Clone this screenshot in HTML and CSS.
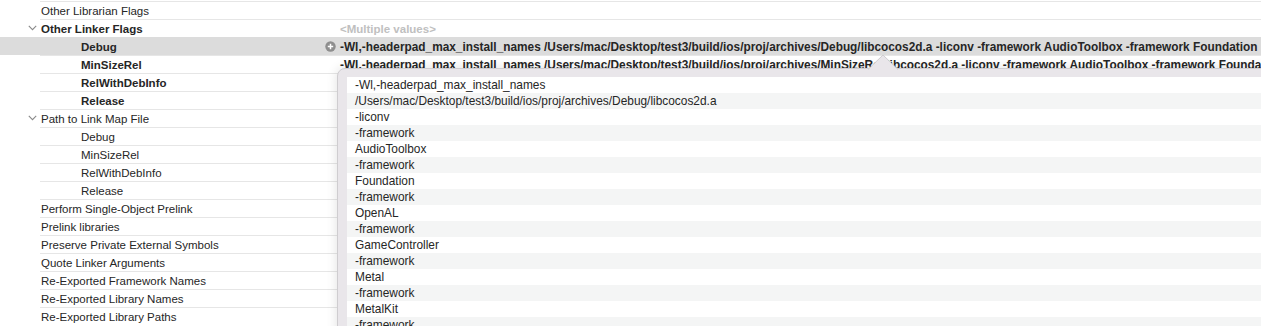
FILE: index.html
```html
<!DOCTYPE html>
<html lang="en">
<head>
    <meta charset="UTF-8">
    <title>Build Settings - Linking</title>
    <link rel="stylesheet" href="styles.css">
</head>
<body>
    <div class="settings">
        <div class="row">
            <div class="disc"></div>
            <div class="cells"><span class="name">Other Librarian Flags</span><span class="icon"></span><span class="value"></span></div>
        </div>
        <div class="row">
            <div class="disc"><svg width="9" height="6" viewBox="0 0 9 6"><path d="M0.8 0.8 L4.5 4.6 L8.2 0.8" fill="none" stroke="#8a8a8a" stroke-width="1.1"/></svg></div>
            <div class="cells"><span class="name bold">Other Linker Flags</span><span class="icon"></span><span class="value multiple">&lt;Multiple values&gt;</span></div>
        </div>
        <div class="row selected">
            <div class="disc"></div>
            <div class="cells"><span class="name bold child">Debug</span><span class="icon"><svg width="11" height="11" viewBox="0 0 11 11"><circle cx="5.5" cy="5.5" r="5.2" fill="#8e8e8e"/><path d="M5.5 2.8 V8.2 M2.8 5.5 H8.2" stroke="#fff" stroke-width="1.5"/></svg></span><span class="value bold">-Wl,-headerpad_max_install_names /Users/mac/Desktop/test3/build/ios/proj/archives/Debug/libcocos2d.a -liconv -framework AudioToolbox -framework Foundation</span></div>
        </div>
        <div class="row">
            <div class="disc"></div>
            <div class="cells"><span class="name bold child">MinSizeRel</span><span class="icon"></span><span class="value bold">-Wl,-headerpad_max_install_names /Users/mac/Desktop/test3/build/ios/proj/archives/MinSizeRel/libcocos2d.a -liconv -framework AudioToolbox -framework Foundation</span></div>
        </div>
        <div class="row">
            <div class="disc"></div>
            <div class="cells"><span class="name bold child">RelWithDebInfo</span><span class="icon"></span><span class="value"></span></div>
        </div>
        <div class="row">
            <div class="disc"></div>
            <div class="cells"><span class="name bold child">Release</span><span class="icon"></span><span class="value"></span></div>
        </div>
        <div class="row">
            <div class="disc"><svg width="9" height="6" viewBox="0 0 9 6"><path d="M0.8 0.8 L4.5 4.6 L8.2 0.8" fill="none" stroke="#8a8a8a" stroke-width="1.1"/></svg></div>
            <div class="cells"><span class="name">Path to Link Map File</span><span class="icon"></span><span class="value"></span></div>
        </div>
        <div class="row">
            <div class="disc"></div>
            <div class="cells"><span class="name child">Debug</span><span class="icon"></span><span class="value"></span></div>
        </div>
        <div class="row">
            <div class="disc"></div>
            <div class="cells"><span class="name child">MinSizeRel</span><span class="icon"></span><span class="value"></span></div>
        </div>
        <div class="row">
            <div class="disc"></div>
            <div class="cells"><span class="name child">RelWithDebInfo</span><span class="icon"></span><span class="value"></span></div>
        </div>
        <div class="row">
            <div class="disc"></div>
            <div class="cells"><span class="name child">Release</span><span class="icon"></span><span class="value"></span></div>
        </div>
        <div class="row">
            <div class="disc"></div>
            <div class="cells"><span class="name">Perform Single-Object Prelink</span><span class="icon"></span><span class="value"></span></div>
        </div>
        <div class="row">
            <div class="disc"></div>
            <div class="cells"><span class="name">Prelink libraries</span><span class="icon"></span><span class="value"></span></div>
        </div>
        <div class="row">
            <div class="disc"></div>
            <div class="cells"><span class="name">Preserve Private External Symbols</span><span class="icon"></span><span class="value"></span></div>
        </div>
        <div class="row">
            <div class="disc"></div>
            <div class="cells"><span class="name">Quote Linker Arguments</span><span class="icon"></span><span class="value"></span></div>
        </div>
        <div class="row">
            <div class="disc"></div>
            <div class="cells"><span class="name">Re-Exported Framework Names</span><span class="icon"></span><span class="value"></span></div>
        </div>
        <div class="row">
            <div class="disc"></div>
            <div class="cells"><span class="name">Re-Exported Library Names</span><span class="icon"></span><span class="value"></span></div>
        </div>
        <div class="row">
            <div class="disc"></div>
            <div class="cells"><span class="name">Re-Exported Library Paths</span><span class="icon"></span><span class="value"></span></div>
        </div>
    </div>

    <div class="popover">
        <svg class="arrow" width="30" height="16" viewBox="0 0 30 16"><path d="M0 15.5 L15 1 L30 15.5" fill="#e9e6ea" stroke="#cfcdd0" stroke-width="1"/></svg>
        <div class="list">
            <div class="item">-Wl,-headerpad_max_install_names</div>
            <div class="item">/Users/mac/Desktop/test3/build/ios/proj/archives/Debug/libcocos2d.a</div>
            <div class="item">-liconv</div>
            <div class="item">-framework</div>
            <div class="item">AudioToolbox</div>
            <div class="item">-framework</div>
            <div class="item">Foundation</div>
            <div class="item">-framework</div>
            <div class="item">OpenAL</div>
            <div class="item">-framework</div>
            <div class="item">GameController</div>
            <div class="item">-framework</div>
            <div class="item">Metal</div>
            <div class="item">-framework</div>
            <div class="item">MetalKit</div>
            <div class="item">-framework</div>
        </div>
    </div>
</body>
</html>
```

FILE: styles.css
```css
body {
    margin: 0;
    padding: 0;
    background-color: #fff;
    font-family: "Liberation Sans", Arial, sans-serif;
    font-size: 11.5px;
    color: #262626;
    overflow: hidden;
    position: relative;
    height: 326px;
}

.settings {
    padding-top: 1px;
}

.row {
    display: flex;
    height: 18px;
}

.row.selected {
    background-color: #dcdcdc;
}

.disc {
    width: 40px;
    display: flex;
    justify-content: flex-end;
    align-items: center;
    padding-right: 3px;
    box-sizing: border-box;
}

.cells {
    flex: 1;
    display: flex;
    align-items: center;
    border-top: 1px solid #e6e6e6;
    min-width: 0;
}

.row.selected .cells {
    border-top-color: #dcdcdc;
}

.name {
    width: 282px;
    padding-left: 1px;
    box-sizing: border-box;
    white-space: nowrap;
}

.name.child {
    padding-left: 41px;
}

.bold {
    font-weight: bold;
}

.icon {
    width: 16px;
    display: flex;
    align-items: center;
    justify-content: center;
}

.value {
    flex: 1;
    padding-left: 2px;
    white-space: nowrap;
    overflow: hidden;
    font-size: 11.85px;
}

.value.multiple {
    color: #c0c0c0;
    font-weight: bold;
    font-size: 11.5px;
}

.popover {
    position: absolute;
    left: 337px;
    top: 68px;
    width: 1000px;
    height: 300px;
    background-color: #e9e6ea;
    border: 1px solid #cfcdd0;
    border-radius: 8px;
    box-shadow: 0 0 12px rgba(0, 0, 0, 0.12);
}

.arrow {
    position: absolute;
    left: 530px;
    top: -15px;
}

.list {
    margin-top: 8px;
    margin-left: 9px;
    background-color: #fff;
}

.item {
    height: 16px;
    line-height: 16px;
    padding-left: 8px;
    font-size: 11.9px;
    color: #262626;
    white-space: nowrap;
}

.item:nth-child(even) {
    background-color: #f4f5f5;
}
```
